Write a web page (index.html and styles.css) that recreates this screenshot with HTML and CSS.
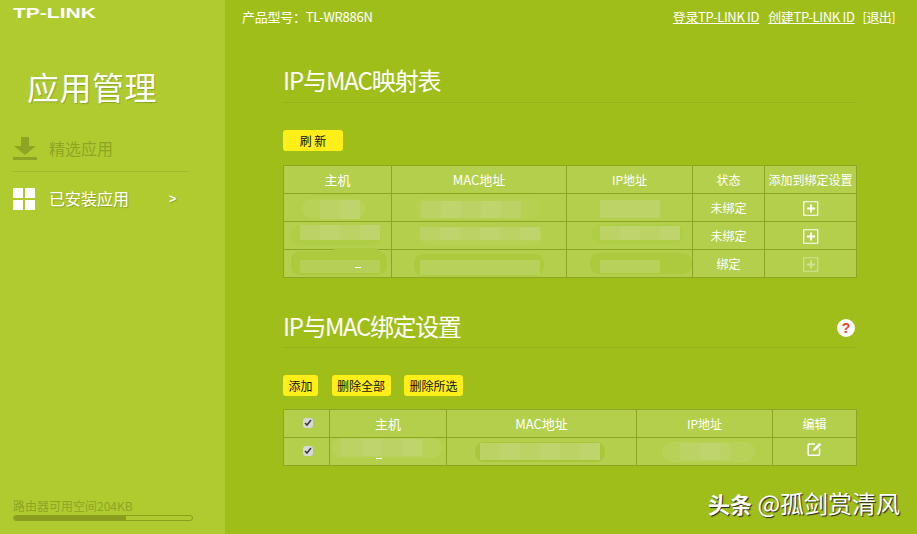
FILE: index.html
```html
<!DOCTYPE html>
<html lang="zh">
<head>
<meta charset="utf-8">
<title>应用管理</title>
<link rel="stylesheet" href="styles.css">
</head>
<body>
<div class="page">
  <aside class="side">
    <div class="logo">TP-LINK</div>
    <h1 class="side-title">应用管理</h1>
    <nav class="menu">
      <a class="menu-item muted">
        <svg class="menu-icon" width="24" height="24" viewBox="0 0 24 24"><path d="M8 0h8v9h7L12 18 1 9h7z M0 20h24v3H0z" fill="#8ea524"/></svg>
        <span>精选应用</span>
      </a>
      <a class="menu-item active">
        <svg class="menu-icon" width="22" height="22" viewBox="0 0 22 22"><path d="M0 0h10v10H0z M12 0h10v10H12z M0 12h10v10H0z M12 12h10v10H12z" fill="#fff"/></svg>
        <span>已安装应用</span>
        <b class="chev">&gt;</b>
      </a>
    </nav>
    <div class="storage">
      <div class="storage-text">路由器可用空间204KB</div>
      <div class="bar"><div class="bar-fill"></div></div>
    </div>
  </aside>
  <main class="main">
    <header class="top">
      <span>产品型号：TL-WR886N</span>
      <span class="links"><a>登录TP-LINK ID</a><a>创建TP-LINK ID</a><span class="logout">[退出]</span></span>
    </header>
    <section class="sec sec-one">
      <h2 class="sec-title">IP与MAC映射表</h2>
      <div class="btns btns-one"><button class="btn btn-refresh">刷 新</button></div>
      <table class="grid grid-one">
        <thead>
          <tr><th class="c1">主机</th><th class="c2">MAC地址</th><th class="c3">IP地址</th><th class="c4">状态</th><th class="c5">添加到绑定设置</th></tr>
        </thead>
        <tbody>
          <tr>
            <td><i class="smear a1"></i></td>
            <td><i class="smear a2"></i></td>
            <td><i class="smear a3"></i></td>
            <td>未绑定</td>
            <td><svg class="plus" width="16" height="15" viewBox="0 0 16 15"><path d="M.75.75h14v13.5H.75z" fill="none" stroke="#fff" stroke-width="1.2"/><path d="M7 3.5h2V6.5h3v2H9v3H7v-3H4v-2h3z" fill="#fff"/></svg></td>
          </tr>
          <tr>
            <td><i class="smear b1"></i></td>
            <td><i class="smear b2"></i></td>
            <td><i class="smear b3"></i></td>
            <td>未绑定</td>
            <td><svg class="plus" width="16" height="15" viewBox="0 0 16 15"><path d="M.75.75h14v13.5H.75z" fill="none" stroke="#fff" stroke-width="1.2"/><path d="M7 3.5h2V6.5h3v2H9v3H7v-3H4v-2h3z" fill="#fff"/></svg></td>
          </tr>
          <tr>
            <td><i class="smear c-1"></i><i class="dash dash-one"></i></td>
            <td><i class="smear c-2"></i></td>
            <td><i class="smear c-3"></i></td>
            <td>绑定</td>
            <td><svg class="plus off" width="16" height="15" viewBox="0 0 16 15"><path d="M.75.75h14v13.5H.75z" fill="none" stroke="#fff" stroke-width="1.2"/><path d="M7 3.5h2V6.5h3v2H9v3H7v-3H4v-2h3z" fill="#fff"/></svg></td>
          </tr>
        </tbody>
      </table>
    </section>
    <section class="sec sec-two">
      <h2 class="sec-title">IP与MAC绑定设置
        <svg class="help" width="20" height="20" viewBox="0 0 20 20"><circle cx="10" cy="10" r="9" fill="#fff"/><text x="10" y="15" text-anchor="middle" class="help-q">?</text></svg>
      </h2>
      <div class="btns btns-two"><button class="btn">添加</button><button class="btn">删除全部</button><button class="btn">删除所选</button></div>
      <table class="grid grid-two">
        <thead>
          <tr><th class="d1"><input class="chk" type="checkbox" checked></th><th class="d2">主机</th><th class="d3">MAC地址</th><th class="d4">IP地址</th><th class="d5">编辑</th></tr>
        </thead>
        <tbody>
          <tr>
            <td><input class="chk" type="checkbox" checked></td>
            <td><i class="smear e1"></i><i class="dash dash-two"></i></td>
            <td><i class="smear e2"></i></td>
            <td><i class="smear e3"></i></td>
            <td><svg class="edit" width="15" height="14" viewBox="0 0 15 14"><path d="M8 2H2.200a1 1 0 0 0-1 1v9.300a1 1 0 0 0 1 1h9.300a1 1 0 0 0 1-1V6.500" fill="none" stroke="#fff" stroke-width="1.5"/><path d="M6 9l.5-2.200L12.300.8l2 2L8.300 8.500z" fill="#fff"/></svg></td>
          </tr>
        </tbody>
      </table>
    </section>
  </main>
  <div class="mark"><b class="mark-brand">头条</b> @孤剑赏清风</div>
</div>
</body>
</html>
```
FILE: styles.css
```css
* { box-sizing: border-box; }
html, body { margin: 0; height: 100%; overflow: hidden; }
body { font-family: "Noto Sans CJK SC", "Open Sans", sans-serif; color: #fff; background: #9fbe1a; }
.page { position: relative; display: flex; width: 917px; height: 534px; }

.side { display: flex; flex-direction: column; flex: 0 0 225px; height: 534px; background: #b0cb30; padding: 0 0 0 13px; }
.logo { font-family: "Liberation Sans", sans-serif; font-weight: 700; font-size: 14px; line-height: 14px; margin-top: 6px; width: 84px; transform: scaleX(1.5); transform-origin: left center; white-space: nowrap; }
.side-title { margin: 44px 0 0 14px; font-size: 32px; line-height: 44px; font-weight: 400; letter-spacing: .5px; text-shadow: 1px 1px 1px #8ea524; }
.menu { margin: 14px 0 0; width: 176px; }
.menu-item { display: flex; align-items: center; font-size: 16px; text-shadow: 1px 1px 1px #8ea524; }
.menu-item span { margin-top: -2px; }
.menu-item.muted { color: #8ea524; text-shadow: none; border-bottom: 1px solid #a1bb2c; height: 50px; padding: 10px 0 5px; }
.menu-item.active { height: 54px; }
.menu-icon { flex: none; margin-right: 12px; }
.active .menu-icon { margin-right: 14px; }
.active span { margin-left: 0; }
.chev { margin-left: 40px; font-family: "Liberation Sans", sans-serif; font-size: 12px; }
.storage { margin-top: auto; margin-bottom: 13px; }
.storage-text { color: #8ea524; font-size: 12px; line-height: 14px; margin-bottom: 2px; }
.bar { width: 180px; height: 6px; border: 1px solid #8a9d1f; border-radius: 3px; overflow: hidden; }
.bar-fill { width: 112px; height: 100%; background: #8a9d1f; }

.main { flex: 1; min-width: 0; }
.top { display: flex; justify-content: space-between; height: 34px; padding: 8px 22px 0 17px; font-size: 13px; line-height: 17px; letter-spacing: -0.25px; }
.links { display: flex; gap: 9px; letter-spacing: -0.33px; }
.logout { margin-left: -1px; letter-spacing: -0.6px; }
.links a { text-decoration: underline; }
.sec { margin-left: 58px; width: 574px; }
.sec-title { position: relative; margin: 0; font-size: 24px; line-height: 34px; font-weight: 400; letter-spacing: -1.1px; border-bottom: 1px solid #94af1f; }
.sec-one { padding-top: 29px; }
.sec-one .sec-title { height: 40px; }
.sec-two { padding-top: 31px; }
.sec-two .sec-title { height: 39px; letter-spacing: -1.4px; }
.help { position: absolute; right: 1px; top: 9px; }
.help-q { font: 700 14px "Liberation Sans", sans-serif; fill: #f0421c; letter-spacing: 0; }
.btns { display: flex; }
.btns-one { margin-top: 27px; }
.btns-two { margin-top: 27px; gap: 13.5px; }
.btn { height: 21px; padding: 0 5.5px; border: 0; border-radius: 3px; background: #ffee18; color: #111; font: 12px/21px "Noto Sans CJK SC", sans-serif; }
.btn-refresh { width: 60px; }
.grid { border-collapse: collapse; table-layout: fixed; width: 574px; margin-top: 14px; font-size: 12px; background: #b3cf4c; }
.grid-two { margin-top: 13px; }
.grid th, .grid td { position: relative; height: 28px; padding: 0; border: 1px solid #8ea524; text-align: center; font-weight: 400; line-height: 16px; }
.grid th { font-size: 12px; }
.grid th.c1, .grid th.c2, .grid th.d2, .grid th.d3 { font-size: 13px; }
.c1 { width: 108px; } .c2 { width: 175px; } .c3 { width: 126px; } .c4 { width: 72px; } .c5 { width: 92px; }
.c5 { white-space: nowrap; }
.d1 { width: 46px; } .d2 { width: 117px; } .d3 { width: 190px; } .d4 { width: 136px; } .d5 { width: 84px; }
.plus { display: block; margin: 1px auto 0; }
.edit { display: block; margin: -5px auto 0; }
.plus.off { opacity: .4; }
.chk { display: block; width: 10px; height: 10px; margin: -1px auto 0; position: relative; left: 1px; accent-color: #d8d8d8; }

.smear { position: absolute; display: block; border-radius: 9px; background: #b6d052; }
.smear::after { content: ""; position: absolute; background: repeating-linear-gradient(90deg, #bcd264 0 20px, #bfd46c 20px 40px); }
.dash { position: absolute; height: 1px; background: #fff; }
.dash-one { left: 71px; top: 17px; width: 6px; }
.dash-two { left: 46px; top: 20px; width: 6px; }

.a1 { left: 18px; top: 5px; width: 63px; height: 19px; background: #b8d157; }
.a1::after { left: 18px; top: 1px; width: 40px; height: 19px; }
.a2 { left: 23px; top: 4px; width: 125px; height: 21px; }
.a2::after { left: 6px; top: 3px; width: 100px; height: 17px; }
.a3 { left: 33px; top: 6px; width: 60px; height: 18px; background: #bdd368; border-radius: 0; }
.a3::after { display: none; }
.b1 { left: 7px; top: 3px; width: 90px; height: 20px; background: #b0cd46; }
.b1::after { left: 9px; top: 0; width: 80px; height: 15px; }
.b2 { left: 28px; top: 5px; width: 123px; height: 18px; background: #b7d155; }
.b2::after { left: 0; top: 0; width: 120px; height: 13px; }
.b3 { left: 25px; top: 2px; width: 91px; height: 20px; background: #b0cd46; }
.b3::after { left: 8px; top: 2px; width: 80px; height: 14px; }
.c-1 { left: 7px; top: 1px; width: 96px; height: 24px; background: #adca3e; }
.c-1::before { content: ""; position: absolute; left: 43px; top: -3px; width: 44px; height: 5px; background: #adca3e; }
.c-1::after { left: 9px; top: 9px; width: 80px; height: 13px; background: #b6cf56; }
.c-2 { left: 22px; top: 4px; width: 130px; height: 22px; background: #adca3e; }
.c-2::after { left: 6px; top: 6px; width: 120px; height: 15px; background: #b8d15a; }
.c-3 { left: 23px; top: 3px; width: 102px; height: 21px; background: #adca3e; }
.c-3::after { left: 10px; top: 7px; width: 60px; height: 13px; background: #b8d15a; }
.e1 { left: 2px; top: 0; width: 110px; height: 20px; background: #b8d157; }
.e1::after { left: 10px; top: 1px; width: 80px; height: 17px; }
.e2 { left: 28px; top: 4px; width: 130px; height: 20px; background: #a9c63a; }
.e2::after { left: 5px; top: 1px; width: 120px; height: 17px; }
.e3 { left: 25px; top: 4px; width: 93px; height: 20px; background: #b8d157; }
.e3::after { left: 18px; top: 1px; width: 50px; height: 17px; }

.mark { position: absolute; left: 708px; top: 487px; font-size: 24px; line-height: 32px; letter-spacing: 0; white-space: nowrap; text-shadow: 1px 1px 1px #222; }
.mark-brand { font-size: 22px; }
```
